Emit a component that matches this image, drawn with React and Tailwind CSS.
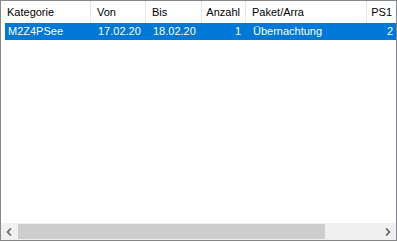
import React from "react";

const columns = [
  { key: "kategorie", label: "Kategorie", width: 90, align: "left" },
  { key: "von", label: "Von", width: 55, align: "left" },
  { key: "bis", label: "Bis", width: 56, align: "left" },
  { key: "anzahl", label: "Anzahl", width: 44, align: "right" },
  { key: "paket", label: "Paket/Arra", width: 121, align: "left" },
  { key: "ps1", label: "PS1", width: 31, align: "right" },
];

const rows = [
  {
    kategorie: "M2Z4PSee",
    von: "17.02.20",
    bis: "18.02.20",
    anzahl: "1",
    paket: "Übernachtung",
    ps1: "2",
  },
];

const App = () => {
  return (
    <div
      className="w-[397px] h-[242px] bg-white"
      style={{ fontFamily: '"Liberation Sans", Arial, sans-serif' }}
    >
      <div className="w-[397px] h-[241px] border border-[#828790] flex flex-col overflow-hidden">
        {/* list area */}
        <div className="flex-1 overflow-hidden">
          {/* header */}
          <div className="flex h-[22px] text-[11px] text-black">
            {columns.map((col) => (
              <div
                key={col.key}
                className={`shrink-0 flex items-center border-r border-[#e5e5e5] ${
                  col.align === "right" ? "justify-end pr-[5px]" : "pl-[6px]"
                }`}
                style={{ width: col.width }}
              >
                {col.label}
              </div>
            ))}
          </div>

          {/* rows */}
          {rows.map((row, i) => (
            <div key={i} className="flex h-[17px] text-[11px] text-white">
              {columns.map((col, j) => (
                <div
                  key={col.key}
                  className={`shrink-0 flex items-center bg-[#0078d7] ${
                    col.align === "right"
                      ? "justify-end pr-[5px]"
                      : j === 0
                      ? "ml-[4px] pl-[3px]"
                      : "pl-[7px]"
                  }`}
                  style={{ width: j === 0 ? col.width - 4 : col.width }}
                >
                  {row[col.key]}
                </div>
              ))}
            </div>
          ))}
        </div>

        {/* horizontal scrollbar */}
        <div className="h-[17px] flex bg-[#f0f0f0]">
          <div className="w-[17px] flex items-center justify-center">
            <svg width="7" height="8" viewBox="0 0 7 8">
              <path d="M5 0.5 L1.5 4 L5 7.5" stroke="#606060" strokeWidth="1.6" fill="none" />
            </svg>
          </div>
          <div className="flex-1 flex py-px">
            <div className="w-[307px] bg-[#cdcdcd]" />
          </div>
          <div className="w-[17px] flex items-center justify-center">
            <svg width="7" height="8" viewBox="0 0 7 8">
              <path d="M2 0.5 L5.5 4 L2 7.5" stroke="#606060" strokeWidth="1.6" fill="none" />
            </svg>
          </div>
        </div>
      </div>
    </div>
  );
};

export default App;
